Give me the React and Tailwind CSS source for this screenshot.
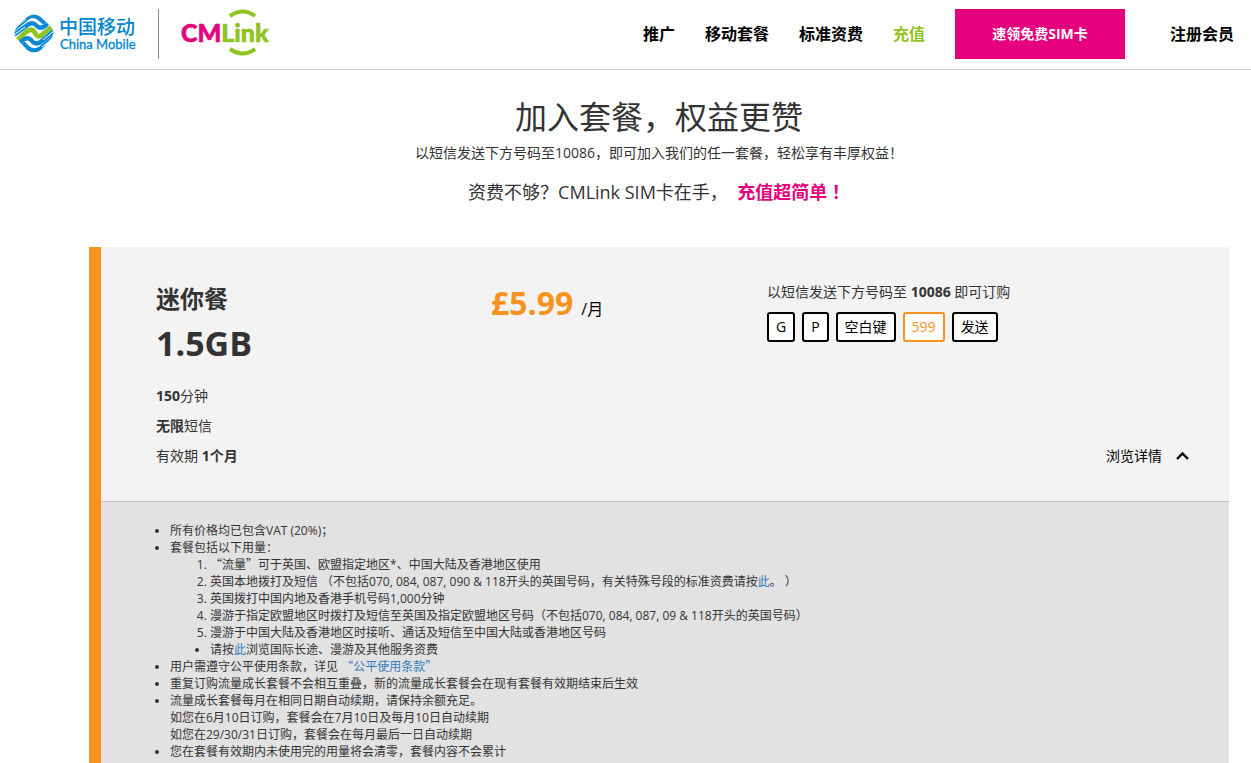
import React, { useState } from 'react';

const navLinks = [
  { label: '推广' },
  { label: '移动套餐' },
  { label: '标准资费' },
  { label: '充值', active: true },
];

const plan = {
  name: '迷你餐',
  data: '1.5GB',
  price: '£5.99',
  minutes: '150',
  keys: [
    { label: 'G' },
    { label: 'P' },
    { label: '空白键' },
    { label: '599', highlight: true },
    { label: '发送' },
  ],
};

const ChinaMobileLogo = () => (
  <svg width="124" height="42" viewBox="0 0 124 42" role="img" aria-label="China Mobile">
    <clipPath id="cm-shape">
      <path d="M13 4 Q20 -1 27 4 L37 14 Q42 20 37 26 L27 37 Q20 42 13 37 L3 26 Q-2 20 3 14 Z" />
    </clipPath>
    <g clipPath="url(#cm-shape)" fill="none">
      <path d="M0 16 L13 5 Q20 0 26 6 L31 10" stroke="#0a8ad6" strokeWidth="4.4" />
      <path d="M0 22 L12 13 Q18 8 22 12 Q26 17 31 13 L34 10" stroke="#0a8ad6" strokeWidth="4.4" />
      <path d="M1 29 L12 19 Q18 14 21 20 Q24 26 29 21 L39 13" stroke="#8fc31f" strokeWidth="4.8" />
      <path d="M6 30 L9 27 Q14 23 18 28 Q22 33 28 28 L40 18" stroke="#0a8ad6" strokeWidth="4.4" />
      <path d="M9 30 L14 35 Q20 40 27 35 L40 24" stroke="#0a8ad6" strokeWidth="4.4" />
      <path d="M0 16 L12 6" stroke="#fff" strokeWidth="1" />
      <path d="M0 22 L11 14" stroke="#fff" strokeWidth="1" />
      <path d="M29 27 L40 18" stroke="#fff" strokeWidth="1" />
      <path d="M28 34 L40 24" stroke="#fff" strokeWidth="1" />
    </g>
    <text x="45" y="21" fill="#0085d0" fontSize="19" fontWeight="500" fontFamily="'Noto Sans CJK SC', sans-serif">中国移动</text>
    <text x="46" y="36" fill="#0085d0" stroke="#0085d0" strokeWidth="0.3" fontSize="13" fontFamily="Lato, sans-serif">China Mobile</text>
  </svg>
);

const CMLinkLogo = () => (
  <svg width="90" height="50" viewBox="0 0 90 50" role="img" aria-label="CMLink">
    <text x="0" y="33" fontSize="25" fontWeight="900" strokeWidth="0.6" fontFamily="Lato, sans-serif">
      <tspan fill="#e4007f" stroke="#e4007f">CM</tspan>
      <tspan fill="#8fc31f" stroke="#8fc31f">Link</tspan>
    </text>
    <path d="M49 7 Q62 -2 74 7" fill="none" stroke="#8fc31f" strokeWidth="4" />
    <path d="M49 40 Q62 49 74 40" fill="none" stroke="#8fc31f" strokeWidth="4" />
  </svg>
);

const Header = () => (
  <header className="flex items-center justify-between h-[70px] pl-[14px] pr-[17px] pb-px border-b border-[#ccc]">
    <a href="#" className="flex items-center">
      <ChinaMobileLogo />
      <span className="w-px h-[50px] ml-5 mr-[22px] bg-[#888]"></span>
      <CMLinkLogo />
    </a>
    <nav className="flex items-center text-base font-bold text-black">
      <div className="flex gap-[30px]">
        {navLinks.map(link => (
          <a key={link.label} href="#" className={link.active ? 'text-[#8fc31f]' : ''}>
            {link.label}
          </a>
        ))}
      </div>
      <a href="#" className="flex items-center justify-center w-[170px] h-[50px] ml-[30px] mr-[45px] bg-[#e5007e] text-sm text-white">
        速领免费SIM卡
      </a>
      <a href="#">注册会员</a>
    </nav>
  </header>
);

// Кавычки на всю ширину иероглифа
const Quoted = ({ children }) => (
  <>
    <span className="leading-none font-['Noto_Sans_CJK_SC',sans-serif]">“</span>
    {children}
    <span className="leading-none font-['Noto_Sans_CJK_SC',sans-serif]">”</span>
  </>
);

const Details = () => (
  <div className="border-t border-[#c4c4c4] bg-[#e2e2e2] pl-[69px] pr-10 pt-5 pb-10 text-xs leading-[17px]">
    <ul className="list-disc">
      <li>所有价格均已包含VAT (20%)；</li>
      <li>
        套餐包括以下用量：
        <ol className="list-decimal pl-10">
          <li><Quoted>流量</Quoted>可于英国、欧盟指定地区*、中国大陆及香港地区使用</li>
          <li>英国本地拨打及短信 （不包括070, 084, 087, 090 &amp; 118开头的英国号码，有关特殊号段的标准资费请按<a href="#" className="text-[#337ab7]">此</a>。 ）</li>
          <li>英国拨打中国内地及香港手机号码1,000分钟</li>
          <li>漫游于指定欧盟地区时拨打及短信至英国及指定欧盟地区号码（不包括070, 084, 087, 09 &amp; 118开头的英国号码）</li>
          <li>漫游于中国大陆及香港地区时接听、通话及短信至中国大陆或香港地区号码</li>
          <li className="list-disc">请按<a href="#" className="text-[#337ab7]">此</a>浏览国际长途、漫游及其他服务资费</li>
        </ol>
      </li>
      <li>用户需遵守公平使用条款，详见 <a href="#" className="text-[#337ab7]"><Quoted>公平使用条款</Quoted></a></li>
      <li>重复订购流量成长套餐不会相互重叠，新的流量成长套餐会在现有套餐有效期结束后生效</li>
      <li>
        流量成长套餐每月在相同日期自动续期，请保持余额充足。<br />
        如您在6月10日订购，套餐会在7月10日及每月10日自动续期<br />
        如您在29/30/31日订购，套餐会在每月最后一日自动续期
      </li>
      <li>您在套餐有效期内未使用完的用量将会清零，套餐内容不会累计</li>
    </ul>
  </div>
);

const PlanCard = () => {
  const [open, setOpen] = useState(true);

  return (
    <section className="border-l-[12px] border-[#f7931e] bg-[#f3f3f3]">
      <div className="grid grid-cols-[335fr_276fr_422fr] pl-[55px] pr-10 pt-[35px] pb-[30px]">
        {/* Название и объём */}
        <div>
          <h2 className="text-2xl leading-[34px] font-bold">{plan.name}</h2>
          <p className="text-[34px] leading-[54px] font-bold">{plan.data}</p>
          <div className="mt-[11px] text-sm leading-[30px]">
            <p><b>{plan.minutes}</b>分钟</p>
            <p><b>无限</b>短信</p>
            <p>有效期 <b>1个月</b></p>
          </div>
        </div>

        {/* Цена */}
        <p className="text-base leading-[42px] text-black">
          <span className="mr-2 text-[32px] font-bold text-[#f7931e]">{plan.price}</span>
          /月
        </p>

        {/* Код для SMS */}
        <div className="flex flex-col justify-between text-sm">
          <div>
            <p className="leading-[19px]">以短信发送下方号码至 <b>10086</b> 即可订购</p>
            <div className="flex gap-[7px] mt-[11px]">
              {plan.keys.map(key => (
                <span
                  key={key.label}
                  className={`flex items-center h-[30px] px-[7px] rounded-[3px] border-2 bg-white ${
                    key.highlight ? 'border-[#f7931e] text-[#f7931e]' : 'border-black text-black'
                  }`}
                >
                  {key.label}
                </span>
              ))}
            </div>
          </div>
          <button
            type="button"
            aria-expanded={open}
            onClick={() => setOpen(!open)}
            className="flex items-center self-end gap-[14px] leading-[30px] text-black cursor-pointer"
          >
            浏览详情
            <svg width="13" height="8" viewBox="0 0 13 8" className={open ? '' : 'rotate-180'}>
              <path d="M1 7 L6.5 1.5 L12 7" fill="none" stroke="currentColor" strokeWidth="2.4" />
            </svg>
          </button>
        </div>
      </div>
      {open && <Details />}
    </section>
  );
};

const App = () => (
  <div className="h-screen overflow-hidden bg-white text-[#333] font-['Open_Sans','Noto_Sans_CJK_SC',sans-serif]">
    <Header />
    <main className="pl-[89px] pr-[22px]">
      <div className="pt-6 pb-[42px] text-center">
        <h1 className="text-[32px] leading-[46px]">加入套餐，权益更赞</h1>
        <p className="text-sm leading-[26px]">以短信发送下方号码至10086，即可加入我们的任一套餐，轻松享有丰厚权益！</p>
        <p className="mt-[14px] text-lg leading-[25px]">
          资费不够？CMLink SIM卡在手，&nbsp; <a href="#" className="font-bold text-[#e5007e]">充值超简单 ！</a>
        </p>
      </div>
      <PlanCard />
    </main>
  </div>
);

export default App;
